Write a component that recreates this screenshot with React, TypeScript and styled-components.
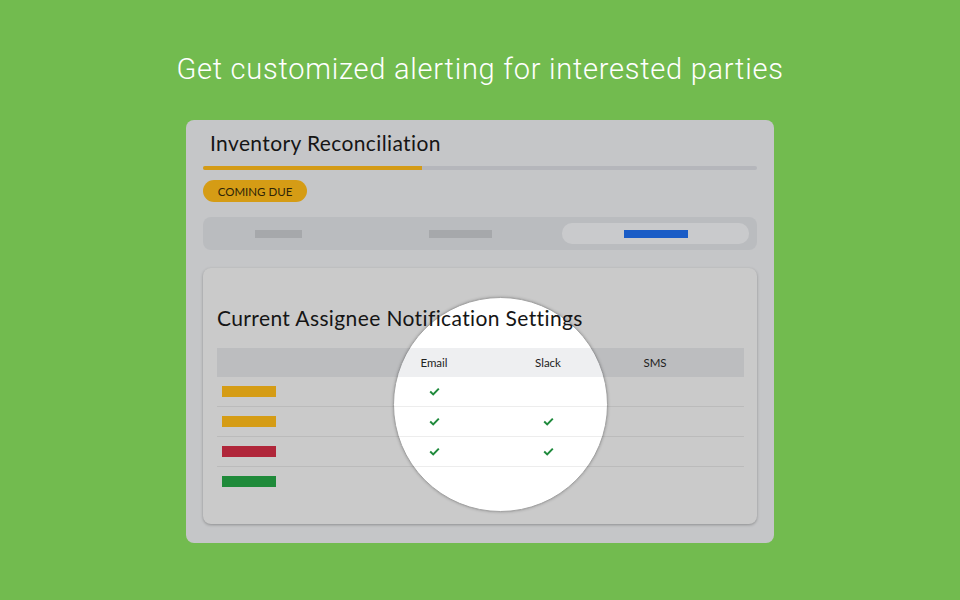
import styled, { createGlobalStyle } from "styled-components";

const GlobalStyle = createGlobalStyle`
  html, body {
    margin: 0;
    padding: 0;
  }
  body {
    font-family: Lato, "Noto Sans", sans-serif;
  }
`;

const Page = styled.div`
  width: 960px;
  height: 600px;
  background-color: #72bb4f;
  display: flex;
  flex-direction: column;
  align-items: center;
  padding-top: 55px;
  box-sizing: border-box;
  overflow: hidden;
`;

const Headline = styled.h1`
  margin: 0;
  font-family: Roboto, "Liberation Sans", sans-serif;
  font-weight: 300;
  font-size: 29px;
  line-height: 28px;
  color: #ffffff;
  letter-spacing: 0.75px;
`;

const Card = styled.div`
  margin-top: 37px;
  width: 588px;
  box-sizing: border-box;
  padding: 10px 17px 19px;
  background-color: #c5c6c8;
  border-radius: 8px;
  display: flex;
  flex-direction: column;
`;

const Title = styled.h2<{ $indent?: number }>`
  margin: 0;
  padding-left: ${({ $indent }) => $indent ?? 0}px;
  font-family: Lato, "Noto Sans", sans-serif;
  font-weight: 400;
  font-size: 21px;
  line-height: 25px;
  letter-spacing: 0.38px;
  color: #151515;
`;

const Track = styled.div`
  margin-top: 11px;
  height: 4px;
  background-color: #b5b6bb;
  border-radius: 2px;
  overflow: hidden;
`;

const Fill = styled.div`
  height: 100%;
  background-color: #d49b16;
`;

const Badge = styled.span`
  margin-top: 10px;
  align-self: flex-start;
  width: 104px;
  height: 22px;
  border-radius: 11px;
  background-color: #d59c15;
  color: #2e2408;
  font-size: 11.5px;
  display: flex;
  align-items: center;
  justify-content: center;
  text-transform: uppercase;
`;

const TabBar = styled.div`
  margin-top: 15px;
  height: 33px;
  box-sizing: border-box;
  padding: 6px 8px 6px 6px;
  border-radius: 8px;
  background-color: #babcbf;
  display: grid;
  grid-template-columns: 139px 1fr 187px;
`;

const Tab = styled.div<{ $active?: boolean; $shift?: number }>`
  display: flex;
  align-items: center;
  justify-content: center;
  padding-left: ${({ $shift }) => $shift ?? 0}px;
  border-radius: 10px;
  background-color: ${({ $active }) => ($active ? "#c9cacc" : "transparent")};
`;

const TabLabel = styled.div<{ $active?: boolean; $w: number }>`
  width: ${({ $w }) => $w}px;
  height: 8px;
  background-color: ${({ $active }) => ($active ? "#1a5cc6" : "#a6a8ab")};
`;

const Panel = styled.div`
  position: relative;
  margin-top: 18px;
  padding: 37px 13px 28px 14px;
  background-color: #cacaca;
  border-radius: 8px;
  box-shadow: 0 1px 3px rgba(0, 0, 0, 0.28);
`;

// the white "magnifier" disc sits over the panel, under its content
const Lens = styled.div`
  position: absolute;
  left: 190px;
  top: 29px;
  width: 215px;
  height: 215px;
  border-radius: 50%;
  background-color: #ffffff;
  border: 1px solid #a3a3a3;
  box-shadow: 0 0 3px rgba(0, 0, 0, 0.25);
  box-sizing: border-box;
`;

const PanelBody = styled.div`
  position: relative;
`;

const Table = styled.div`
  margin-top: 18px;
  display: flex;
  flex-direction: column;
`;

const Row = styled.div<{ $head?: boolean }>`
  display: grid;
  grid-template-columns: 160px 114px 114px 100px 1fr;
  height: 29px;
  align-items: center;
  background-color: ${({ $head }) => ($head ? "rgba(10, 30, 50, 0.07)" : "transparent")};
  border-bottom: ${({ $head }) => ($head ? "none" : "1px solid rgba(0, 0, 0, 0.07)")};
  &:last-child {
    border-bottom: none;
  }
`;

const Cell = styled.div`
  display: flex;
  justify-content: center;
  align-items: center;
  font-size: 11.5px;
  color: #222;
`;

const LabelCell = styled.div`
  padding-left: 5px;
  display: flex;
  align-items: center;
`;

const Swatch = styled.div<{ $color: string }>`
  width: 54px;
  height: 11px;
  background-color: ${({ $color }) => $color};
`;

const Check = () => (
  <svg width="11" height="9" viewBox="0 0 11 9">
    <path d="M1.2 4.6 L4.2 7.4 L9.8 1.6" fill="none" stroke="#1f8a3c" strokeWidth="2" />
  </svg>
);

type Assignee = { color: string; email: boolean; slack: boolean; sms: boolean };

const rows: Assignee[] = [
  { color: "#d59c15", email: true, slack: false, sms: false },
  { color: "#d59c15", email: true, slack: true, sms: false },
  { color: "#b0263a", email: true, slack: true, sms: false },
  { color: "#1f8a3a", email: false, slack: false, sms: false },
];

export default function App() {
  return (
    <>
      <GlobalStyle />
      <Page>
        <Headline>Get customized alerting for interested parties</Headline>
        <Card>
          <Title $indent={7}>Inventory Reconciliation</Title>
          <Track>
            <Fill style={{ width: "39.6%" }} />
          </Track>
          <Badge>Coming due</Badge>
          <TabBar>
            <Tab>
              <TabLabel $w={47} />
            </Tab>
            <Tab $shift={10}>
              <TabLabel $w={63} />
            </Tab>
            <Tab $active>
              <TabLabel $active $w={64} />
            </Tab>
          </TabBar>
          <Panel>
            <Lens />
            <PanelBody>
              <Title>Current Assignee Notification Settings</Title>
              <Table>
                <Row $head>
                  <LabelCell />
                  <Cell>Email</Cell>
                  <Cell>Slack</Cell>
                  <Cell>SMS</Cell>
                </Row>
                {rows.map((r, i) => (
                  <Row key={i}>
                    <LabelCell>
                      <Swatch $color={r.color} />
                    </LabelCell>
                    <Cell>{r.email && <Check />}</Cell>
                    <Cell>{r.slack && <Check />}</Cell>
                    <Cell>{r.sms && <Check />}</Cell>
                  </Row>
                ))}
              </Table>
            </PanelBody>
          </Panel>
        </Card>
      </Page>
    </>
  );
}
